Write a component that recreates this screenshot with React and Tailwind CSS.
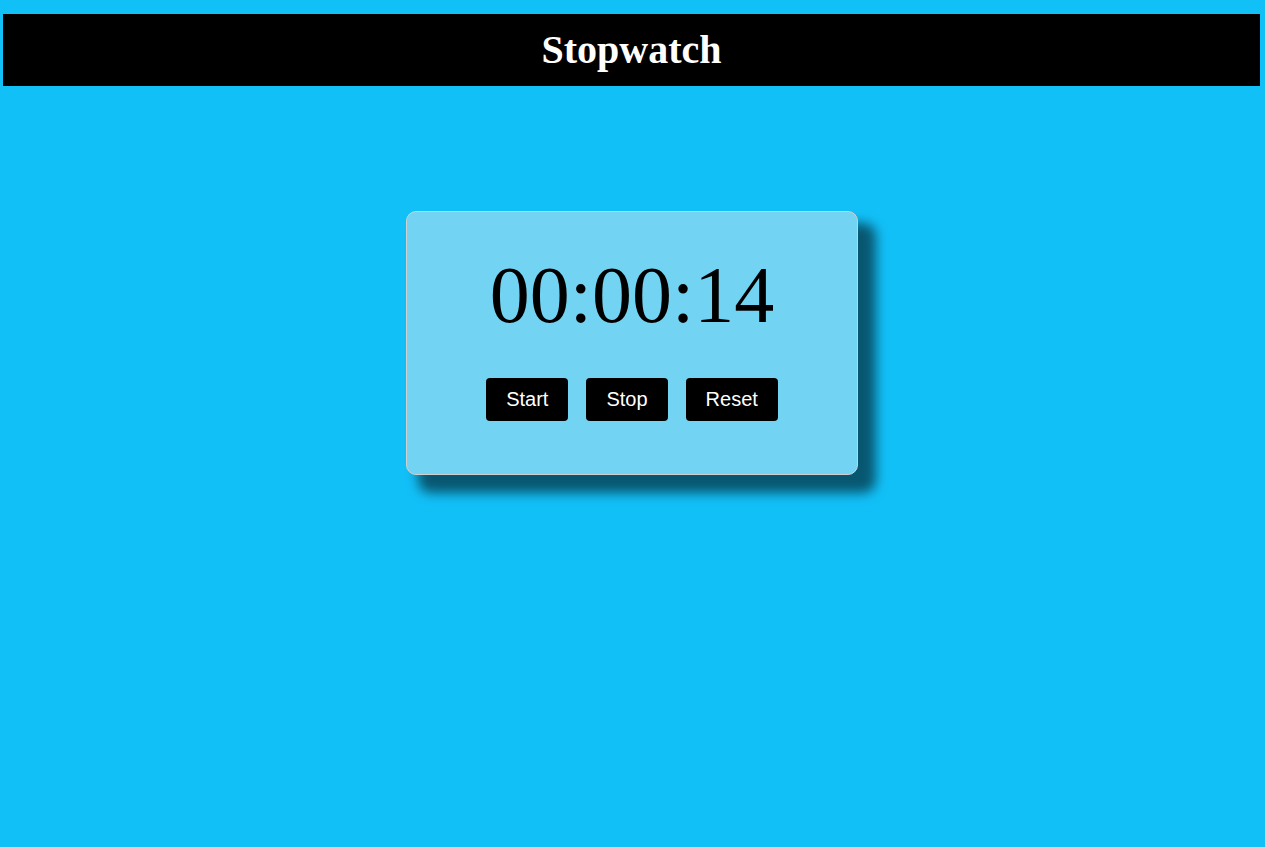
export default function App() {
  return (
    <div className="min-h-screen w-full bg-[#12c0f8] pt-[14px] font-['Liberation_Serif',serif]">
      <header className="ml-[3px] mr-[5px] flex h-[72px] items-center justify-center bg-black">
        <h1 className="text-[40px] font-bold text-white">Stopwatch</h1>
      </header>

      <main className="flex justify-center pt-[125px] pr-px">
        <div className="w-[452px] rounded-[10px] border border-[#d0d0d0] bg-[#72d4f2] pt-[39px] pb-[53px] shadow-[15px_15px_12px_3px_rgba(0,0,0,0.55)]">
          <div className="text-center text-[80px] leading-[89px] text-black">00:00:14</div>
          <div className="mt-[38px] flex justify-center gap-[18px] font-['Liberation_Sans',Arial,sans-serif]">
            <button className="rounded-[4px] bg-black px-[20px] py-[10px] text-[20px] leading-[23px] text-white">Start</button>
            <button className="rounded-[4px] bg-black px-[20px] py-[10px] text-[20px] leading-[23px] text-white">Stop</button>
            <button className="rounded-[4px] bg-black px-[20px] py-[10px] text-[20px] leading-[23px] text-white">Reset</button>
          </div>
        </div>
      </main>
    </div>
  )
}
